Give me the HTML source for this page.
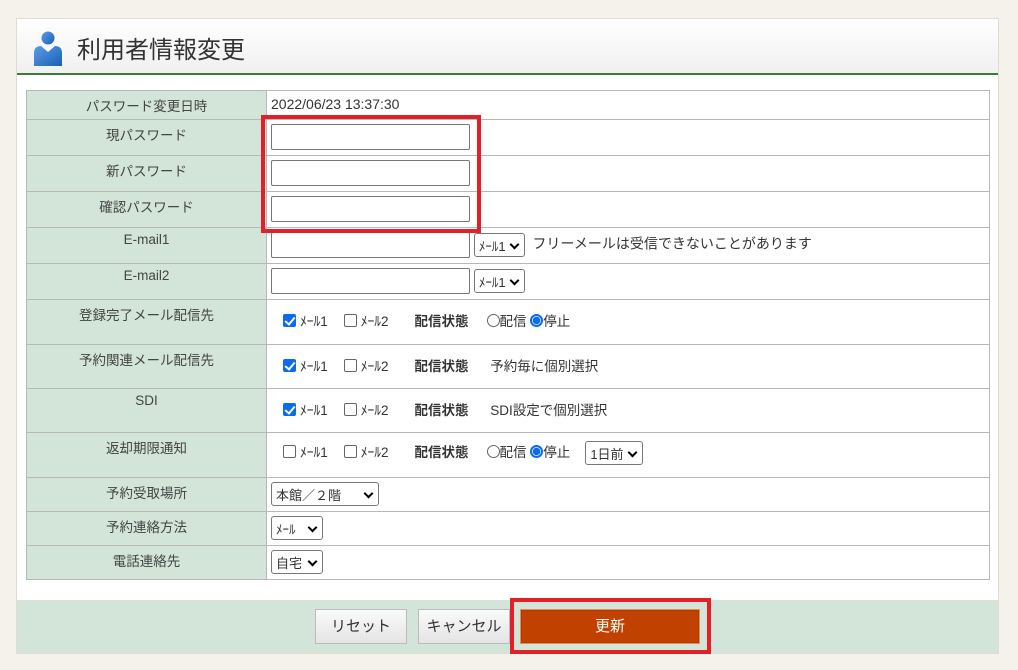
<!DOCTYPE html>
<html><head><meta charset="utf-8"><style>
*{box-sizing:border-box;margin:0;padding:0}
body{width:1018px;height:670px;background:#f5f2ec;font-family:"Liberation Sans","Noto Sans CJK JP",sans-serif;font-size:14px;color:#333;position:relative;overflow:hidden}
.panel{position:absolute;left:16px;top:18px;width:983px;height:636px;background:#fff;border:1px solid #e0ddd0}
.hdr{position:absolute;left:0;top:0;width:981px;height:56px;background:linear-gradient(#fff,#f0f0f0);border-bottom:2px solid #3a7a3a}
.hdr h1{position:absolute;left:60px;top:11px;font-size:24px;font-weight:normal;color:#333}
table{position:absolute;left:26px;top:90px;width:964px;border-collapse:collapse}
td{border:1px solid #b8b8b8;vertical-align:top;padding:4px 4px}
td.l{width:240px;background:#d2e5d8;text-align:center;color:#444;font-size:13.5px}
.in{display:inline-block;width:199px;height:26px;border:1px solid #777;border-radius:2px;background:#fff;vertical-align:middle}
.sel{display:inline-block;height:24px;border:1px solid #777;border-radius:3px;background:#fff;font-size:13px;padding:2px 4px;vertical-align:middle;position:relative;padding-right:18px}
.sel:after{content:"";position:absolute;right:6px;top:7px;width:5px;height:5px;border-right:2px solid #000;border-bottom:2px solid #000;transform:rotate(45deg)}
.cb{display:inline-block;width:13px;height:13px;border:1px solid #666;border-radius:2px;vertical-align:-1px;margin-right:4px}
.cb.on{background:#0b6bf0;border-color:#0b6bf0;position:relative}
.cb.on:after{content:"";position:absolute;left:3px;top:0px;width:4px;height:8px;border-right:2px solid #fff;border-bottom:2px solid #fff;transform:rotate(40deg)}
.rd{display:inline-block;width:13px;height:13px;border:1px solid #666;border-radius:50%;vertical-align:-1px}
.rd.on{border:2px solid #0b6bf0;background:radial-gradient(circle,#0b6bf0 0 3.5px,#fff 4px)}
.ck{padding:10px 16px;font-size:13.5px}
.ck span{margin-right:16px}
b{font-weight:bold;margin:0 18px 0 10px}
.foot{position:absolute;left:17px;top:600px;width:981px;height:53px;background:#d2e5d8}
.btn{position:absolute;top:609px;height:35px;border:1px solid #bbb;background:linear-gradient(#fafafa,#e4e4e4);font-size:15px;text-align:center;line-height:33px;color:#333}
.red{position:absolute;border:4px solid #e3202a}
</style></head><body>
<div class="panel"><div class="hdr">
<svg style="position:absolute;left:17px;top:11px" width="28" height="36" viewBox="0 0 28 36"><defs><linearGradient id="g" x1="0" y1="0" x2="1" y2="1"><stop offset="0" stop-color="#5b9de6"/><stop offset="1" stop-color="#1a5fb8"/></linearGradient></defs><circle cx="14" cy="8" r="6.5" fill="url(#g)"/><path d="M0 36V23Q0 16 7 16L14 22L21 16Q28 16 28 23V36Z" fill="url(#g)"/></svg>
<h1>利用者情報変更</h1></div></div>
<table>
<tr style="height:29px"><td class="l">パスワード変更日時</td><td style="padding-top:5px">2022/06/23 13:37:30</td></tr>
<tr style="height:36px"><td class="l">現パスワード</td><td><span class="in"></span></td></tr>
<tr style="height:36px"><td class="l">新パスワード</td><td><span class="in"></span></td></tr>
<tr style="height:36px"><td class="l">確認パスワード</td><td><span class="in"></span></td></tr>
<tr style="height:36px"><td class="l">E-mail1</td><td><span class="in"></span> <span class="sel">ﾒｰﾙ1</span>&nbsp; フリーメールは受信できないことがあります</td></tr>
<tr style="height:36px"><td class="l">E-mail2</td><td><span class="in"></span> <span class="sel">ﾒｰﾙ1</span></td></tr>
<tr style="height:45px"><td class="l">登録完了メール配信先</td><td class="ck"><span><i class="cb on"></i>ﾒｰﾙ1</span><span><i class="cb"></i>ﾒｰﾙ2</span><b>配信状態</b><i class="rd"></i>配信 <i class="rd on"></i>停止</td></tr>
<tr style="height:44px"><td class="l">予約関連メール配信先</td><td class="ck"><span><i class="cb on"></i>ﾒｰﾙ1</span><span><i class="cb"></i>ﾒｰﾙ2</span><b>配信状態</b> 予約毎に個別選択</td></tr>
<tr style="height:44px"><td class="l">SDI</td><td class="ck"><span><i class="cb on"></i>ﾒｰﾙ1</span><span><i class="cb"></i>ﾒｰﾙ2</span><b>配信状態</b> SDI設定で個別選択</td></tr>
<tr style="height:45px"><td class="l">返却期限通知</td><td class="ck" style="padding-top:8px"><span><i class="cb"></i>ﾒｰﾙ1</span><span><i class="cb"></i>ﾒｰﾙ2</span><b>配信状態</b><i class="rd"></i>配信 <i class="rd on"></i>停止 &nbsp;&nbsp; <span class="sel">1日前</span></td></tr>
<tr style="height:34px"><td class="l">予約受取場所</td><td><span class="sel" style="width:108px">本館／２階</span></td></tr>
<tr style="height:34px"><td class="l">予約連絡方法</td><td><span class="sel" style="width:52px">ﾒｰﾙ</span></td></tr>
<tr style="height:34px"><td class="l">電話連絡先</td><td><span class="sel" style="width:52px">自宅</span></td></tr>
</table>
<div class="red" style="left:261px;top:115px;width:220px;height:118px"></div>
<div class="foot"></div>
<div class="btn" style="left:315px;width:92px">リセット</div>
<div class="btn" style="left:418px;width:92px">キャンセル</div>
<div class="btn" style="left:520px;width:180px;background:#c14200;border:1px solid #e09060;color:#fff;box-shadow:inset 0 0 0 1px #b03a00">更新</div>
<div class="red" style="left:510px;top:598px;width:201px;height:56px"></div>
</body></html>
